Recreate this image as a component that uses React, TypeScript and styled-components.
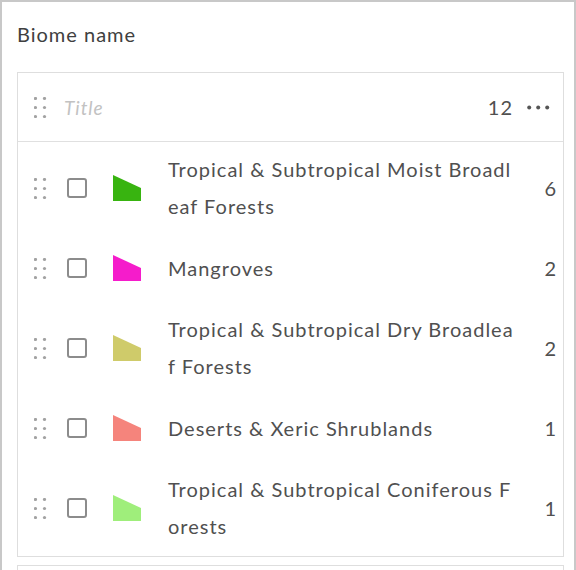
import styled, { createGlobalStyle } from "styled-components";

const GlobalStyle = createGlobalStyle`
  body {
    margin: 0;
    background: #ffffff;
    font-family: Lato, "Liberation Sans", sans-serif;
  }
`;

type Biome = {
  lines: string[];
  count: number;
  color: string;
};

const biomes: Biome[] = [
  { lines: ["Tropical & Subtropical Moist Broadl", "eaf Forests"], count: 6, color: "#38b410" },
  { lines: ["Mangroves"], count: 2, color: "#f51ccb" },
  { lines: ["Tropical & Subtropical Dry Broadlea", "f Forests"], count: 2, color: "#cfcb6a" },
  { lines: ["Deserts & Xeric Shrublands"], count: 1, color: "#f5847c" },
  { lines: ["Tropical & Subtropical Coniferous F", "orests"], count: 1, color: "#9fee7b" },
];

const Handle = () => (
  <HandleSvg width="13" height="21" viewBox="0 0 13 21">
    {[1.5, 10.5].map((x) =>
      [1.5, 10.5, 19.5].map((y) => <circle key={`${x}-${y}`} cx={x} cy={y} r="1.6" />)
    )}
  </HandleSvg>
);

const Swatch = ({ color }: { color: string }) => (
  <SwatchSvg width="28" height="26" viewBox="0 0 28 26">
    <polygon points="0,0 28,13 28,26 0,26" fill={color} />
  </SwatchSvg>
);

const App = () => {
  return (
    <>
      <GlobalStyle />
      <Frame>
        <Label>Biome name</Label>
        <Card>
          <Header>
            <Handle />
            <Placeholder>Title</Placeholder>
            <Total>12</Total>
            <More width="24" height="5" viewBox="0 0 24 5">
              <circle cx="2.2" cy="2.5" r="2" />
              <circle cx="11.2" cy="2.5" r="2" />
              <circle cx="20.2" cy="2.5" r="2" />
            </More>
          </Header>
          <Rows>
            {biomes.map((b) => (
              <Row key={b.lines.join("")}>
                <Handle />
                <Check />
                <Swatch color={b.color} />
                <Name>
                  {b.lines.map((l) => (
                    <Line key={l}>{l}</Line>
                  ))}
                </Name>
                <Count>{b.count}</Count>
              </Row>
            ))}
          </Rows>
        </Card>
        <Card />
      </Frame>
    </>
  );
};

export default App;

const Frame = styled.div`
  box-sizing: border-box;
  width: 576px;
  min-height: 640px;
  border: 2px solid #c8c8c8;
  padding: 20px 10px 0 15px;
  display: flex;
  flex-direction: column;
  gap: 8px;
`;
const Label = styled.div`
  font-size: 20px;
  letter-spacing: 0.05em;
  color: #404040;
  line-height: 24px;
  margin-bottom: 18px;
`;
const Card = styled.div`
  border: 1.5px solid #dedede;
  min-height: 60px;
`;
const Header = styled.div`
  height: 68px;
  display: flex;
  align-items: center;
  padding: 0 12px 0 16px;
  border-bottom: 1.5px solid #e0e0e0;
`;
const HandleSvg = styled.svg`
  fill: #a2a2a2;
  flex-shrink: 0;
`;
const Placeholder = styled.div`
  flex: 1;
  margin-left: 17px;
  font-size: 19px;
  font-style: italic;
  color: #c2c2c2;
  letter-spacing: 0.05em;
`;
const Total = styled.div`
  font-size: 20px;
  color: #505050;
  letter-spacing: 0.05em;
`;
const More = styled.svg`
  fill: #555;
  margin-left: 14px;
`;
const Rows = styled.div`
  padding: 6px 0 8px;
`;
const Row = styled.div`
  min-height: 80px;
  display: flex;
  align-items: center;
  padding: 0 6px 0 16px;
`;
const Check = styled.div`
  box-sizing: border-box;
  width: 20px;
  height: 20px;
  border: 2px solid #8c8c8c;
  border-radius: 3px;
  margin-left: 20px;
  flex-shrink: 0;
`;
const SwatchSvg = styled.svg`
  margin-left: 26px;
  flex-shrink: 0;
`;
const Name = styled.div`
  flex: 1;
  margin-left: 27px;
  font-size: 20px;
  line-height: 37px;
  color: #505050;
  letter-spacing: 0.05em;
`;
const Line = styled.div`
  white-space: nowrap;
`;
const Count = styled.div`
  font-size: 20px;
  color: #505050;
  letter-spacing: 0.05em;
`;
